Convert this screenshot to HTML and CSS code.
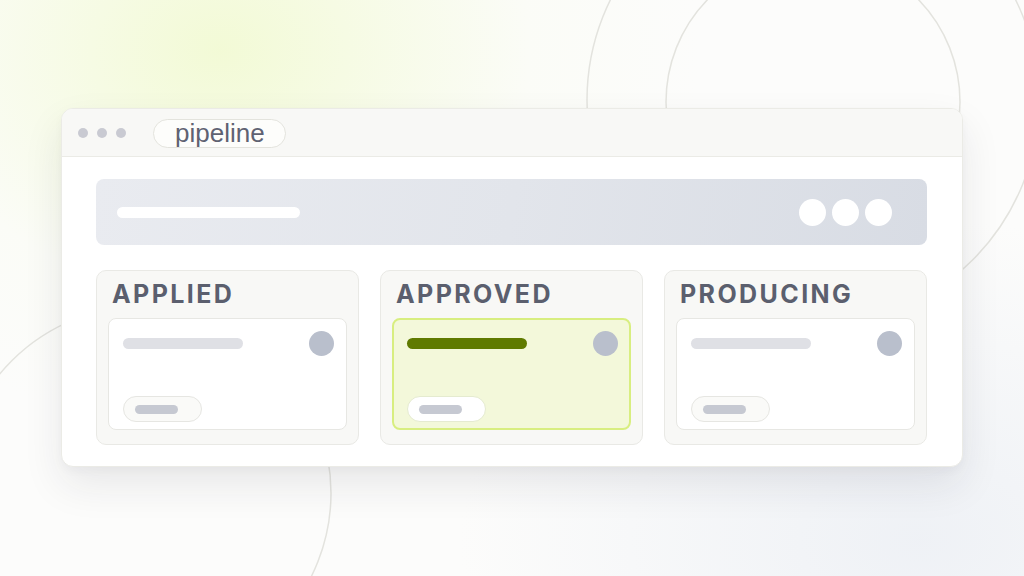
FILE: index.html
```html
<!DOCTYPE html>
<html lang="en">
<head>
<meta charset="utf-8">
<title>pipeline</title>
<link rel="stylesheet" href="styles.css">
</head>
<body>
<div class="stage">
  <svg class="deco" width="1024" height="576" viewBox="0 0 1024 576" aria-hidden="true">
    <circle cx="813" cy="100" r="226" fill="none" stroke="#e3e3de" stroke-width="1.5"/>
    <circle cx="813" cy="102" r="147" fill="none" stroke="#e3e3de" stroke-width="1.5"/>
    <circle cx="144" cy="493" r="187" fill="none" stroke="#e3e3de" stroke-width="1.5"/>
  </svg>
  <div class="window">
    <div class="titlebar">
      <div class="dots"><span></span><span></span><span></span></div>
      <div class="tab">pipeline</div>
    </div>
    <div class="content">
      <div class="topbar">
        <div class="topline"></div>
        <div class="topcircles"><span></span><span></span><span></span></div>
      </div>
      <div class="columns">
        <div class="column">
          <div class="label">APPLIED</div>
          <div class="card">
            <div class="card-top"><div class="bar"></div><div class="avatar"></div></div>
            <div class="chip"><div class="chip-bar"></div></div>
          </div>
        </div>
        <div class="column">
          <div class="label">APPROVED</div>
          <div class="card card-active">
            <div class="card-top"><div class="bar bar-active"></div><div class="avatar"></div></div>
            <div class="chip chip-active"><div class="chip-bar"></div></div>
          </div>
        </div>
        <div class="column">
          <div class="label">PRODUCING</div>
          <div class="card">
            <div class="card-top"><div class="bar"></div><div class="avatar"></div></div>
            <div class="chip"><div class="chip-bar"></div></div>
          </div>
        </div>
      </div>
    </div>
  </div>
</div>
</body>
</html>
```
FILE: styles.css
```css
* { box-sizing: border-box; }
html, body { margin: 0; padding: 0; }
body {
  width: 1024px;
  height: 576px;
  overflow: hidden;
  font-family: "Inter", "Liberation Sans", sans-serif;
  background:
    radial-gradient(ellipse 480px 380px at 220px 50px, rgba(242, 250, 212, 0.95) 0%, rgba(245, 251, 224, 0.7) 35%, rgba(249, 252, 238, 0.3) 65%, rgba(252, 252, 248, 0) 100%),
    radial-gradient(ellipse 460px 320px at 920px 540px, rgba(237, 240, 245, 0.9), rgba(242, 244, 247, 0) 100%),
    #fcfcfb;
}
.stage {
  position: relative;
  width: 1024px;
  height: 576px;
  display: grid;
  place-items: center;
}
.deco {
  position: absolute;
  left: 0;
  top: 0;
}
.window {
  position: relative;
  width: 902px;
  height: 359px;
  margin-top: -1px;
  background: #ffffff;
  border: 1px solid #ebebe6;
  border-radius: 12px;
  box-shadow: 0 18px 40px rgba(30, 35, 50, 0.09), 0 4px 10px rgba(30, 35, 50, 0.03);
  overflow: hidden;
  display: flex;
  flex-direction: column;
}
.titlebar {
  height: 48px;
  flex: none;
  background: #f8f8f6;
  border-bottom: 1px solid #ebebe6;
  display: flex;
  align-items: center;
  padding-left: 16px;
  padding-top: 1px;
}
.dots { display: flex; gap: 9px; }
.dots span {
  width: 10px;
  height: 10px;
  border-radius: 50%;
  background: #c9cad2;
}
.tab {
  margin-left: 27px;
  height: 29px;
  padding: 0 20px 0 21px;
  border: 1px solid #e3e3dd;
  border-radius: 15px;
  background: #fdfdfb;
  font-family: "Liberation Sans", Arial, sans-serif;
  font-size: 26px;
  line-height: 25px;
  color: #5f6272;
  display: flex;
  align-items: center;
}
.content {
  flex: 1;
  padding: 22px 35px 21px 34px;
  display: flex;
  flex-direction: column;
  gap: 25px;
}
.topbar {
  height: 66px;
  border-radius: 8px;
  background: linear-gradient(100deg, #e9ebf0 0%, #e2e5eb 50%, #d8dce4 100%);
  display: flex;
  align-items: center;
  justify-content: space-between;
  padding: 0 35px 0 21px;
}
.topline {
  width: 183px;
  height: 11px;
  border-radius: 6px;
  background: #ffffff;
}
.topcircles { display: flex; gap: 6px; }
.topcircles span {
  width: 27px;
  height: 27px;
  border-radius: 50%;
  background: #ffffff;
}
.columns {
  flex: 1;
  display: grid;
  grid-template-columns: repeat(3, 263px);
  justify-content: space-between;
}
.column {
  background: #f8f8f6;
  border: 1px solid #e9e9e5;
  border-radius: 10px;
  padding: 8px 11px 14px 11px;
  display: flex;
  flex-direction: column;
  gap: 9px;
}
.label {
  padding-left: 4px;
  font-size: 25px;
  line-height: 30px;
  font-weight: 700;
  letter-spacing: 2.4px;
  color: #5b5f6e;
}
.card {
  flex: 1;
  background: #ffffff;
  border: 1px solid #e7e7e3;
  border-radius: 8px;
  padding: 12px 12px 7px 14px;
  display: flex;
  flex-direction: column;
  justify-content: space-between;
}
.card-active {
  background: #f3f8da;
  border: 2px solid #d8ee80;
  padding: 11px 11px 6px 13px;
}
.card-top {
  display: flex;
  align-items: center;
  justify-content: space-between;
}
.bar {
  width: 120px;
  height: 11px;
  border-radius: 6px;
  background: #dfe0e5;
}
.bar-active { background: #5f7a00; }
.avatar {
  width: 25px;
  height: 25px;
  border-radius: 50%;
  background: #b9bfcc;
}
.chip {
  width: 79px;
  height: 26px;
  border: 1px solid #e6e6e2;
  border-radius: 13px;
  background: #fafaf8;
  display: flex;
  align-items: center;
  padding-left: 11px;
}
.chip-active {
  background: #ffffff;
  border-color: #e5ebd0;
}
.chip-bar {
  width: 43px;
  height: 9px;
  border-radius: 5px;
  background: #c6c9d2;
}
```
